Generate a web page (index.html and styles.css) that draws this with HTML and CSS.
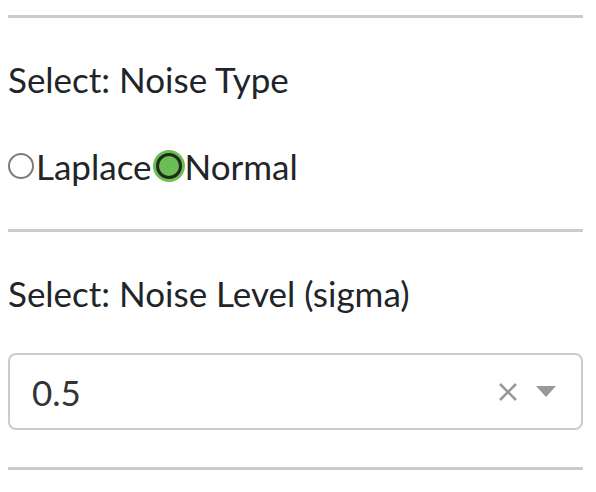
FILE: index.html
```html
<!DOCTYPE html>
<html>
<head>
<meta charset="utf-8">
<link rel="stylesheet" href="styles.css">
</head>
<body>
<div class="panel">
  <hr class="rule">
  <div class="label">Select: Noise Type</div>
  <div class="radios">
    <label class="radio"><span class="dot"></span>Laplace</label>
    <label class="radio"><span class="dot checked"></span>Normal</label>
  </div>
  <hr class="rule">
  <div class="label">Select: Noise Level (sigma)</div>
  <div class="select">
    <span class="value">0.5</span>
    <span class="clear">
      <svg width="22" height="22" viewBox="0 0 22 22"><path d="M3 3 L19 19 M19 3 L3 19" stroke="#999" stroke-width="2.6" fill="none"/></svg>
    </span>
    <span class="arrow">
      <svg width="20" height="12" viewBox="0 0 20 12"><path d="M0 0 H20 L10 11 Z" fill="#999"/></svg>
    </span>
  </div>
  <hr class="rule">
</div>
</body>
</html>
```
FILE: styles.css
```css
html, body {
  margin: 0;
  padding: 0;
  background: #fff;
}
body {
  padding: 0 13px 0 8px;
  font-family: Lato, "Noto Sans", sans-serif;
  color: #212529;
}
.panel {
  display: flex;
  flex-direction: column;
}
.rule {
  margin: 0;
  border: none;
  border-top: 3px solid #cbcbcb;
  height: 0;
}
.panel > .rule:first-child {
  margin-top: 15px;
}
.label {
  font-size: 35px;
  line-height: 48px;
  margin-top: 37px;
}
.radios {
  display: flex;
  margin-top: 39px;
  margin-bottom: 39px;
  font-size: 35px;
  line-height: 48px;
}
.radio {
  display: flex;
  align-items: center;
}
.dot {
  width: 22px;
  height: 22px;
  border: 2px solid #7c7c7c;
  border-radius: 50%;
  box-sizing: content-box;
  margin-right: 2px;
}
.dot.checked {
  width: 20px;
  height: 20px;
  background: #6dbd55;
  border: 3px solid #1f2a1e;
  box-shadow: 0 0 0 3px #6dbd55;
  margin-left: 4px;
  margin-right: 3px;
}
.select {
  margin-top: 36px;
  margin-bottom: 37px;
  height: 73px;
  border: 2px solid #cccccc;
  border-radius: 8px;
  display: flex;
  align-items: center;
  padding: 0 25px 0 22px;
}
.value {
  flex: 1;
  font-size: 35px;
  color: #333;
}
.clear {
  display: flex;
  margin-right: 17px;
}
.arrow {
  display: flex;
}
```
